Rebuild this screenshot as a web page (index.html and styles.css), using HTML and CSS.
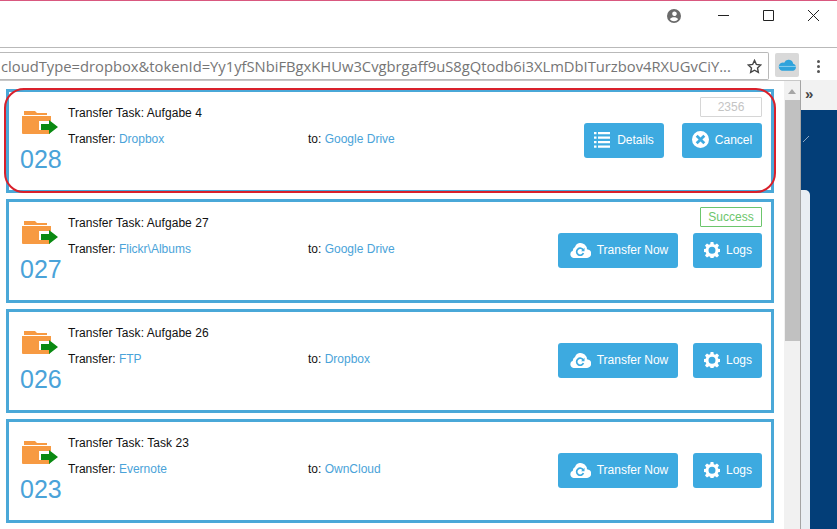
FILE: index.html
```html
<!DOCTYPE html>
<html lang="de">
<head>
<meta charset="utf-8">
<title>Transfer Tasks</title>
<link rel="stylesheet" href="styles.css">
</head>
<body>
<svg class="defs" width="0" height="0" aria-hidden="true">
  <symbol id="folder" viewBox="0 0 36 26">
    <path d="M2 1h11l2 2h10v2H2z" fill="#f79a42"/>
    <path d="M0 6h29v5H17v9h11v4H1a1 1 0 0 1-1-1z" fill="#f79a42"/>
    <path d="M19 14h8v-4l9 7-9 7v-4h-8z" fill="#0a8a12"/>
  </symbol>
  <symbol id="list" viewBox="0 0 16 16">
    <path d="M0 0h2.500v2.200H0zM4 0h12v2.200H4zM0 4.500h2.500v2.200H0zM4 4.500h12v2.200H4zM0 9h2.500v2.200H0zM4 9h12v2.200H4zM0 13.500h2.500v2.200H0zM4 13.500h12v2.200H4z" fill="#fff"/>
  </symbol>
  <symbol id="cancel" viewBox="0 0 16 16">
    <path fill-rule="evenodd" d="M8 0a8 8 0 1 0 0 16A8 8 0 0 0 8 0zM5.300 3.500 8 6.200l2.700-2.700 1.800 1.800L9.800 8l2.700 2.700-1.800 1.800L8 9.800l-2.700 2.700-1.800-1.800L6.200 8 3.500 5.300z" fill="#fff"/>
  </symbol>
  <symbol id="cloud" viewBox="0 0 22 16">
    <path d="M18 7.200A6.500 6.500 0 0 0 10.500 1 6 6 0 0 0 6 5 4 4 0 0 0 3.800 8.700 3.800 3.800 0 0 0 4.500 16h13.200a4.400 4.400 0 0 0 .3-8.800z" fill="#fff"/>
    <path d="M14.300 8.200a3.500 3.500 0 1 0 .1 2.800" fill="none" stroke="#3daae0" stroke-width="1.700"/>
    <path d="M15.500 5.800v3.400h-3.400z" fill="#3daae0"/>
  </symbol>
  <symbol id="cog" viewBox="0 0 16 16">
    <path fill-rule="evenodd" d="M6.600 0h2.800l.4 2.200 1.300.6L13 1.500l2 2-1.300 1.900.5 1.300 2.300.4v2.800l-2.300.4-.5 1.300 1.300 1.900-2 2-1.900-1.300-1.300.5-.4 2.300H6.600l-.4-2.300-1.300-.5L3 15.500l-2-2 1.300-1.900-.5-1.300L-.5 9.900V7.100l2.300-.4.5-1.300L1 3.500l2-2 1.900 1.300 1.300-.6zM8 4.800a3.500 3.500 0 1 0 0 7 3.500 3.500 0 0 0 0-7z" fill="#fff"/>
  </symbol>
</svg>

<header class="titlebar">
  <svg class="account" viewBox="0 0 14 14" width="14" height="14"><path fill-rule="evenodd" d="M7 0a7 7 0 1 0 0 14A7 7 0 0 0 7 0zm0 2.500A2.300 2.300 0 1 1 7 7a2.300 2.300 0 0 1 0-4.500zM2.900 10.300C3.700 8.900 5.400 8.300 7 8.300s3.300.6 4.100 2A5 5 0 0 1 7 12.300a5 5 0 0 1-4.100-2z" fill="#6b6b6b"/></svg>
  <svg class="win min" viewBox="0 0 11 11" width="11" height="11"><path d="M0 5.500h11" stroke="#222" fill="none"/></svg>
  <svg class="win max" viewBox="0 0 11 11" width="11" height="11"><path d="M.5.500h10v10H.5z" stroke="#222" fill="none"/></svg>
  <svg class="win close" viewBox="0 0 11 11" width="11" height="11"><path d="M0 0l11 11M11 0L0 11" stroke="#222" fill="none"/></svg>
</header>

<div class="toolbar">
  <div class="address">
    <span class="url">cloudType=dropbox&amp;tokenId=Yy1yfSNbiFBgxKHUw3Cvgbrgaff9uS8gQtodb6i3XLmDbITurzbov4RXUGvCiY...</span>
    <svg class="star" viewBox="0 0 16 16" width="15" height="15"><path d="M8 1.500l2 4.300 4.700.6-3.500 3.200.9 4.700L8 12l-4.100 2.300.9-4.700L1.300 6.400 6 5.800z" fill="none" stroke="#444" stroke-width="1.500"/></svg>
  </div>
  <div class="ext">
    <svg viewBox="0 0 20 12" width="19" height="12"><path d="M16 4.800A5 5 0 0 0 6.500 3.500 4.300 4.300 0 0 0 4 12h12a3.700 3.700 0 0 0 0-7.200z" fill="#2ea3dc"/><path d="M1 7.500h18" stroke="#8fd0ee" fill="none"/></svg>
  </div>
  <div class="menu"><i></i><i></i><i></i></div>
</div>

<div class="content">
  <main class="popup">
    <div class="list">
      <article class="card">
        <div class="id">
          <svg class="folder" width="36" height="26"><use href="#folder"/></svg>
          <div class="num">028</div>
        </div>
        <div class="info">
          <div class="title">Transfer Task: Aufgabe 4</div>
          <div class="route">
            <div class="from">Transfer: <a>Dropbox</a></div>
            <div class="to">to: <a>Google Drive</a></div>
          </div>
        </div>
        <div class="side">
          <div class="badge muted">2356</div>
          <div class="actions">
            <button class="btn details"><svg width="16" height="16"><use href="#list"/></svg>Details</button>
            <button class="btn cancel"><svg width="17" height="17"><use href="#cancel"/></svg>Cancel</button>
          </div>
        </div>
      </article>

      <article class="card">
        <div class="id">
          <svg class="folder" width="36" height="26"><use href="#folder"/></svg>
          <div class="num">027</div>
        </div>
        <div class="info">
          <div class="title">Transfer Task: Aufgabe 27</div>
          <div class="route">
            <div class="from">Transfer: <a>Flickr\Albums</a></div>
            <div class="to">to: <a>Google Drive</a></div>
          </div>
        </div>
        <div class="side">
          <div class="badge ok">Success</div>
          <div class="actions wide">
            <button class="btn now"><svg width="22" height="16"><use href="#cloud"/></svg>Transfer Now</button>
            <button class="btn logs"><svg width="16" height="16"><use href="#cog"/></svg>Logs</button>
          </div>
        </div>
      </article>

      <article class="card">
        <div class="id">
          <svg class="folder" width="36" height="26"><use href="#folder"/></svg>
          <div class="num">026</div>
        </div>
        <div class="info">
          <div class="title">Transfer Task: Aufgabe 26</div>
          <div class="route">
            <div class="from">Transfer: <a>FTP</a></div>
            <div class="to">to: <a>Dropbox</a></div>
          </div>
        </div>
        <div class="side">
          <div class="badge none"></div>
          <div class="actions wide">
            <button class="btn now"><svg width="22" height="16"><use href="#cloud"/></svg>Transfer Now</button>
            <button class="btn logs"><svg width="16" height="16"><use href="#cog"/></svg>Logs</button>
          </div>
        </div>
      </article>

      <article class="card">
        <div class="id">
          <svg class="folder" width="36" height="26"><use href="#folder"/></svg>
          <div class="num">023</div>
        </div>
        <div class="info">
          <div class="title">Transfer Task: Task 23</div>
          <div class="route">
            <div class="from">Transfer: <a>Evernote</a></div>
            <div class="to">to: <a>OwnCloud</a></div>
          </div>
        </div>
        <div class="side">
          <div class="badge none"></div>
          <div class="actions wide">
            <button class="btn now"><svg width="22" height="16"><use href="#cloud"/></svg>Transfer Now</button>
            <button class="btn logs"><svg width="16" height="16"><use href="#cog"/></svg>Logs</button>
          </div>
        </div>
      </article>
    </div>
    <div class="scrollbar">
      <span class="arrow"></span>
      <span class="thumb"></span>
    </div>
    <div class="ring"></div>
  </main>
  <aside class="page">
    <div class="bookmarks">»</div>
    <div class="navy">
      <svg class="tick" viewBox="0 0 8 8" width="8" height="8"><path d="M0 7l6-6" stroke="#8aa5c2" fill="none"/></svg>
      <div class="sheet"></div>
    </div>
  </aside>
</div>
</body>
</html>
```

FILE: styles.css
```css
* { box-sizing: border-box; }
html, body { margin: 0; height: 100%; }
body {
  width: 837px;
  height: 529px;
  overflow: hidden;
  background: #fff;
  font-family: "Liberation Sans", Arial, sans-serif;
  display: flex;
  flex-direction: column;
}
.defs { position: absolute; }

/* window chrome */
.titlebar {
  height: 48px;
  flex: none;
  border-top: 1px solid #d9587f;
  border-bottom: 1px solid #b9b9b9;
  display: flex;
  align-items: flex-start;
  padding-top: 8px;
}
.account { margin-left: 667px; }
.win { margin-top: 1px; }
.min { margin-left: 37px; }
.max { margin-left: 34px; }
.close { margin-left: 34px; }

.toolbar {
  height: 32px;
  flex: none;
  display: flex;
  align-items: flex-start;
  padding-top: 4px;
}
.address {
  width: 769px;
  height: 28px;
  flex: none;
  border: 1px solid #b9b9b9;
  border-left: 0;
  border-radius: 0 2px 2px 0;
  display: flex;
  align-items: center;
}
.url {
  flex: 1;
  margin-left: 1px;
  font-family: "Open Sans", sans-serif;
  font-size: 14.75px;
  color: #757575;
  white-space: nowrap;
}
.star { margin: 0 6px 0 7px; flex: none; }
.ext {
  width: 24px;
  height: 24px;
  margin: 1px 0 0 6px;
  background: #d9d9d9;
  border-radius: 2px;
  display: flex;
  align-items: center;
  justify-content: center;
}
.menu {
  display: flex;
  flex-direction: column;
  gap: 2px;
  margin: 8px 0 0 18px;
}
.menu i { width: 3px; height: 3px; border-radius: 50%; background: #555; }

/* popup */
.content { flex: 1; display: flex; min-height: 0; }
.popup {
  position: relative;
  width: 801px;
  flex: none;
  display: flex;
  border-top: 1px solid #c8c8c8;
  border-right: 1px solid #a4a4a4;
  background: #fff;
  overflow: hidden;
}
.list {
  flex: 1;
  padding: 8px 10px 0 6px;
  display: flex;
  flex-direction: column;
  gap: 6px;
}
.card {
  height: 104px;
  flex: none;
  border: 3px solid #4aa8d8;
  display: flex;
  padding: 0 9px 0 0;
  background: #fff;
}
.id { width: 59px; flex: none; padding: 18px 0 0 11px; }
.folder { display: block; margin-left: 2px; }
.num {
  font-size: 25px;
  line-height: 28px;
  color: #4aa3d9;
  margin-top: 9px;
}
.info { flex: 1; padding-top: 14px; font-size: 12px; color: #111; }
.title { line-height: 15px; letter-spacing: .05px; }
.route { display: flex; margin-top: 11px; line-height: 15px; }
.from { width: 240px; }
.route a { color: #4aa3d9; }
.side {
  display: flex;
  flex-direction: column;
  align-items: flex-end;
  padding-top: 5px;
}
.badge {
  width: 62px;
  height: 20px;
  font-size: 12px;
  line-height: 18px;
  text-align: center;
  border: 1px solid;
  border-radius: 1px;
}
.badge.muted { color: #c4c4c4; border-color: #d6d6d6; }
.badge.ok { color: #6cc66c; border-color: #6cc66c; }
.badge.none { border-color: transparent; }
.actions { display: flex; margin-top: 6px; gap: 18px; }
.actions.wide { gap: 15px; }
.btn {
  height: 35px;
  border: 0;
  padding: 0 0 2px;
  border-radius: 3px;
  background: #3daae0;
  color: #fff;
  font: 12px "Liberation Sans", Arial, sans-serif;
  display: flex;
  align-items: center;
  justify-content: center;
  gap: 7px;
}
.details { width: 80px; }
.cancel { width: 80px; gap: 6px; }
.now { width: 120px; gap: 6px; padding-left: 1px; }
.logs { width: 69px; gap: 6px; padding-left: 1px; }

.scrollbar {
  width: 16px;
  flex: none;
  background: #f1f1f1;
  display: flex;
  flex-direction: column;
  align-items: center;
}
.arrow {
  margin-top: 8px;
  width: 0;
  height: 0;
  border: 4px solid transparent;
  border-top: 0;
  border-bottom: 5px solid #a6a6a6;
}
.thumb { width: 15px; height: 241px; margin-top: 6px; background: #c1c1c1; }

.ring {
  position: absolute;
  left: 4px;
  top: 7px;
  width: 772px;
  height: 105px;
  border: 2px solid #d9202b;
  border-radius: 20px;
  pointer-events: none;
}

/* page behind the popup */
.page { flex: 1; display: flex; flex-direction: column; min-width: 0; }
.bookmarks {
  height: 30px;
  flex: none;
  background: #f2f2f2;
  color: #444;
  font-size: 15px;
  font-weight: bold;
  line-height: 28px;
  padding-left: 4px;
}
.navy { flex: 1; background: #033e78; position: relative; }
.tick { position: absolute; left: 2px; top: 25px; }
.sheet {
  position: absolute;
  left: 0;
  top: 80px;
  bottom: 0;
  width: 9px;
  background: #e9eef3;
  border-radius: 0 5px 0 0;
}
```
